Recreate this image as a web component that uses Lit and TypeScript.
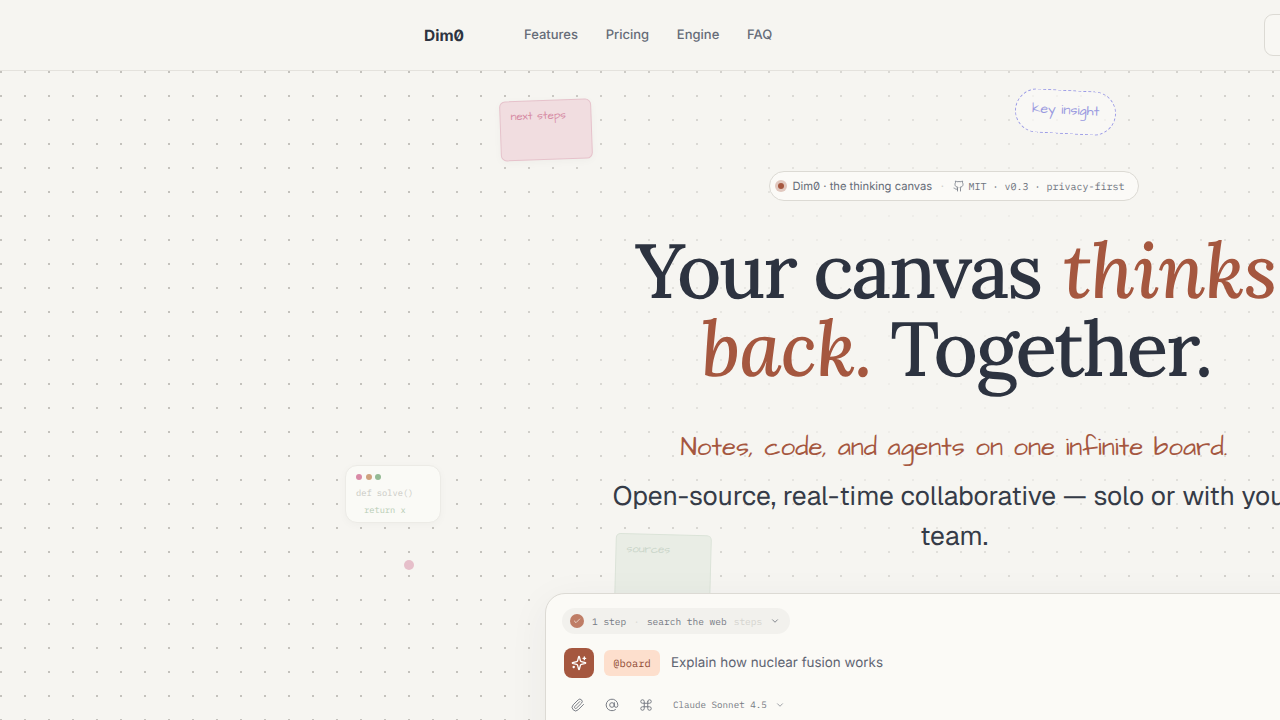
import { LitElement, html, css, svg } from "lit";
import { customElement } from "lit/decorators.js";

const icon = (size: number, cls: string, d: ReturnType<typeof svg>) => html`<svg class=${cls} width=${size} height=${size} viewBox="0 0 24 24" fill="none" stroke="currentColor" stroke-width="2" stroke-linecap="round" stroke-linejoin="round">${d}</svg>`;

const chevron = svg`<path d="m6 9 6 6 6-6"/>`;
const check = svg`<path d="M20 6 9 17l-5-5"/>`;
const github = svg`<path d="M15 22v-4a4.8 4.8 0 0 0-1-3.5c3 0 6-2 6-5.5.08-1.25-.27-2.48-1-3.5.28-1.15.28-2.35 0-3.5 0 0-1 0-3 1.5-2.64-.5-5.36-.5-8 0C6 2 5 2 5 2c-.3 1.15-.3 2.35 0 3.5A5.403 5.403 0 0 0 4 9c0 3.5 3 5.5 6 5.5-.39.49-.68 1.05-.85 1.65-.17.6-.22 1.23-.15 1.85v4"/><path d="M9 18c-4.51 2-5-2-7-2"/>`;
const sparkles = svg`<path d="M9.937 15.5A2 2 0 0 0 8.5 14.063l-6.135-1.582a.5.5 0 0 1 0-.962L8.5 9.936A2 2 0 0 0 9.937 8.5l1.582-6.135a.5.5 0 0 1 .963 0L14.063 8.5A2 2 0 0 0 15.5 9.937l6.135 1.581a.5.5 0 0 1 0 .964L15.5 14.063a2 2 0 0 0-1.437 1.437l-1.582 6.135a.5.5 0 0 1-.963 0z"/><path d="M20 3v4"/><path d="M22 5h-4"/><path d="M4 17v2"/><path d="M5 18H3"/>`;
const paperclip = svg`<path d="m21.44 11.05-9.19 9.19a6 6 0 0 1-8.49-8.49l8.57-8.57A4 4 0 1 1 18 8.84l-8.59 8.57a2 2 0 0 1-2.83-2.83l8.49-8.48"/>`;
const at = svg`<circle cx="12" cy="12" r="4"/><path d="M16 8v5a3 3 0 0 0 6 0v-1a10 10 0 1 0-4 8"/>`;
const command = svg`<path d="M15 6v12a3 3 0 1 0 3-3H6a3 3 0 1 0 3 3V6a3 3 0 1 0-3 3h12a3 3 0 1 0-3-3"/>`;

@customElement("app-root")
export class AppRoot extends LitElement {
  static styles = css`
    :host {
      display: block;
      width: 1280px;
      height: 720px;
      overflow: hidden;
      background: #f6f5f1;
      color: #2d3340;
      font-family: Inter, "Noto Sans", sans-serif;
      text-rendering: geometricPrecision;
    }
    .nav {
      display: flex;
      align-items: center;
      height: 70px;
      padding-left: 424px;
      border-bottom: 1px solid #e4e2dd;
      overflow: hidden;
    }
    .logo {
      width: 100px;
      flex: none;
      font-weight: 700;
      font-size: 15.5px;
      font-feature-settings: "zero";
      color: #2d3340;
    }
    .links { display: flex; gap: 27.7px; font-size: 13px; color: #666c78; font-weight: 500; }
    .nav-btn {
      margin-left: 492px;
      width: 100px;
      height: 42px;
      flex: none;
      box-sizing: border-box;
      border: 1px solid #dcdad4;
      border-radius: 9px;
      background: #f8f7f3;
    }
    .canvas {
      position: relative;
      height: 649px;
      overflow: hidden;
      background-image:
        radial-gradient(ellipse 560px 420px at 954px 260px, rgba(246,245,241,.85) 30%, rgba(246,245,241,0) 100%),
        radial-gradient(circle at 1px 1px, #c4c2bd 1px, transparent 1.2px);
      background-size: 100% 100%, 24px 24px;
    }
    .hero {
      display: flex;
      flex-direction: column;
      align-items: center;
      width: 816px;
      margin-left: 546px;
      padding-top: 100px;
    }
    .badge {
      display: flex;
      align-items: center;
      height: 30px;
      box-sizing: border-box;
      padding: 0 13px 0 8px;
      border: 1px solid #dcdad4;
      border-radius: 15px;
      background: #fbfaf7;
      font-size: 11.2px;
      color: #666c78;
      white-space: nowrap;
      font-feature-settings: "zero";
    }
    .pulse {
      flex: none;
      width: 6px; height: 6px; border-radius: 50%;
      background: #a5573f;
      box-shadow: 0 0 0 3px rgba(165,87,63,.3);
      margin: 0 8px 0 0;
    }
    .sep { margin: 0 6px; color: #b5b3ae; }
    .sep.wide { margin: 0 8.5px; color: #d0cec9; }
    .mono { font-family: "IBM Plex Mono", monospace; color: #6f7480; }
    .badge .mono { font-size: 10px; }
    .badge svg { margin-right: 4px; stroke-width: 1.5; }
    h1 {
      margin: 31px 0 0;
      padding-left: 4px;
      font-family: Lora, serif;
      font-weight: 500;
      font-size: 76.8px;
      line-height: 78px;
      letter-spacing: -0.03em;
      text-align: center;
      color: #2d3340;
      width: 720px;
      box-sizing: content-box;
    }
    h1 em { color: #a5573f; font-style: italic; letter-spacing: -0.01em; margin-left: 4px; }
    .tag {
      margin: 42px 0 0;
      font-family: "Architects Daughter", cursive;
      font-size: 26px;
      line-height: 36px;
      color: #a5573f;
    }
    .sub {
      margin: 10px 0 0;
      width: 700px;
      font-family: Geist, Inter, sans-serif;
      font-weight: 400;
      font-size: 26.5px;
      line-height: 40px;
      text-align: center;
      color: #353b47;
    }
    .panel {
      position: absolute;
      left: 545px;
      top: 522px;
      width: 818px;
      height: 200px;
      box-sizing: border-box;
      padding: 14px 16px;
      background: #fbfaf6;
      border: 1px solid #dcdad4;
      border-radius: 20px;
      box-shadow: 0 10px 40px rgba(45,51,64,.06);
    }
    .steps {
      display: inline-flex;
      align-items: center;
      height: 26px;
      padding: 0 10px 0 8px;
      border-radius: 13px;
      background: #f2f1ed;
      font-family: "IBM Plex Mono", monospace;
      font-size: 9.5px;
      color: #777b84;
    }
    .ok {
      display: grid; place-items: center;
      width: 14px; height: 14px; border-radius: 50%;
      background: #bf7d66; color: #fbfaf6;
      margin-right: 8px;
    }
    .dim { color: #d5d4cf; margin-left: 7px; }
    .steps .sep { margin: 0 7.5px; color: #d5d4cf; }
    .steps .chev { margin-left: 8px; color: #6f737c; }
    .row { display: flex; align-items: center; margin-top: 14px; margin-left: 2px; }
    .spark {
      display: grid; place-items: center;
      width: 30px; height: 30px; border-radius: 8px;
      background: #a5573f; color: #fff;
      margin-right: 10px;
    }
    .chip {
      display: grid; place-items: center;
      width: 56px; height: 26px; border-radius: 6px;
      background: #fddfcd; color: #8f4a33;
      font-family: "IBM Plex Mono", monospace;
      font-size: 10.4px;
      margin-right: 11px;
    }
    .prompt { font-size: 13.4px; color: #5f6572; }
    .tools { display: flex; align-items: center; margin-top: 20px; margin-left: 9px; color: #777b84; }
    .tools svg { margin-right: 20px; stroke-width: 1.7; }
    .model { font-family: "IBM Plex Mono", monospace; font-size: 9.2px; color: #777b84; }
    .tools .chev { margin: 0 0 0 8px; }
    .float { position: absolute; box-sizing: border-box; }
    .note1 {
      left: 500px; top: 29px; width: 92px; height: 60px;
      transform: rotate(-2deg);
      background: #f1dde0; border: 1px solid #e6c2cb; border-radius: 6px;
      padding: 7px 10px;
      font-family: "Architects Daughter", cursive; font-size: 11.5px; color: #d68aa3;
      box-shadow: 0 2px 8px rgba(0,0,0,.03);
    }
    .insight {
      left: 1015px; top: 18.5px; width: 101px; height: 44px;
      padding-bottom: 4px;
      transform: rotate(3deg);
      display: grid; place-items: center;
      background: rgba(251,250,247,.7);
      border: 1.5px dashed #9a9ae6; border-radius: 22px;
      font-family: "Architects Daughter", cursive; font-size: 14px; color: #9a9ae0;
    }
    .code {
      left: 345px; top: 394px; width: 96px; height: 58px;
      padding: 8px 10px;
      background: #fafaf6; border: 1px solid #ecebe6; border-radius: 12px;
      font-family: "IBM Plex Mono", monospace; font-size: 8.7px; line-height: 16.5px; color: #c9c9c3;
      box-shadow: 0 2px 8px rgba(0,0,0,.03);
    }
    .dots { display: flex; gap: 3.5px; margin-bottom: 6px; }
    .dots i { width: 6px; height: 6px; border-radius: 50%; }
    .ret { color: #b6ccb4; padding-left: 8px; }
    .dot { left: 404px; top: 489px; width: 10px; height: 10px; border-radius: 50%; background: #e6bfca; }
    .note2 {
      left: 615px; top: 463px; width: 96px; height: 70px;
      transform: rotate(1.5deg);
      background: #e9ede5; border: 1px solid #dbe3d8; border-radius: 5px;
      padding: 7px 10px;
      font-family: "Architects Daughter", cursive; font-size: 11.5px; color: #c9d5c9;
    }
  `;
  render() {
    return html`
      <header class="nav">
        <div class="logo">Dim0</div>
        <nav class="links"><span>Features</span><span>Pricing</span><span>Engine</span><span>FAQ</span></nav>
        <div class="nav-btn"></div>
      </header>
      <main class="canvas">
        <div class="float note1">next steps</div>
        <div class="float insight">key insight</div>
        <div class="float code">
          <div class="dots"><i style="background:#d98aa6"></i><i style="background:#cfa27e"></i><i style="background:#94ba94"></i></div>
          <div>def solve()</div>
          <div class="ret">return x</div>
        </div>
        <div class="float dot"></div>
        <div class="float note2">sources</div>
        <section class="hero">
          <div class="badge">
            <span class="pulse"></span>
            <span>Dim0 · the thinking canvas</span>
            <span class="sep wide">·</span>
            ${icon(12, "", github)}
            <span class="mono">MIT</span><span class="sep mono">·</span>
            <span class="mono">v0.3</span><span class="sep mono">·</span>
            <span class="mono">privacy-first</span>
          </div>
          <h1>Your canvas <em>thinks back.</em> Together.</h1>
          <p class="tag">Notes, code, and agents on one infinite board.</p>
          <p class="sub">Open-source, real-time collaborative — solo or with your team.</p>
        </section>
        <section class="panel">
          <div class="steps">
            <span class="ok">${icon(8, "", check)}</span>
            <span>1 step</span><span class="sep">·</span><span>search the web</span><span class="dim">steps</span>
            ${icon(10, "chev", chevron)}
          </div>
          <div class="row">
            <span class="spark">${icon(16, "", sparkles)}</span>
            <span class="chip">@board</span>
            <span class="prompt">Explain how nuclear fusion works</span>
          </div>
          <div class="tools">
            ${icon(14, "", paperclip)}${icon(14, "", at)}${icon(14, "", command)}
            <span class="model">Claude Sonnet 4.5</span>${icon(10, "chev", chevron)}
          </div>
        </section>
      </main>
    `;
  }
}
